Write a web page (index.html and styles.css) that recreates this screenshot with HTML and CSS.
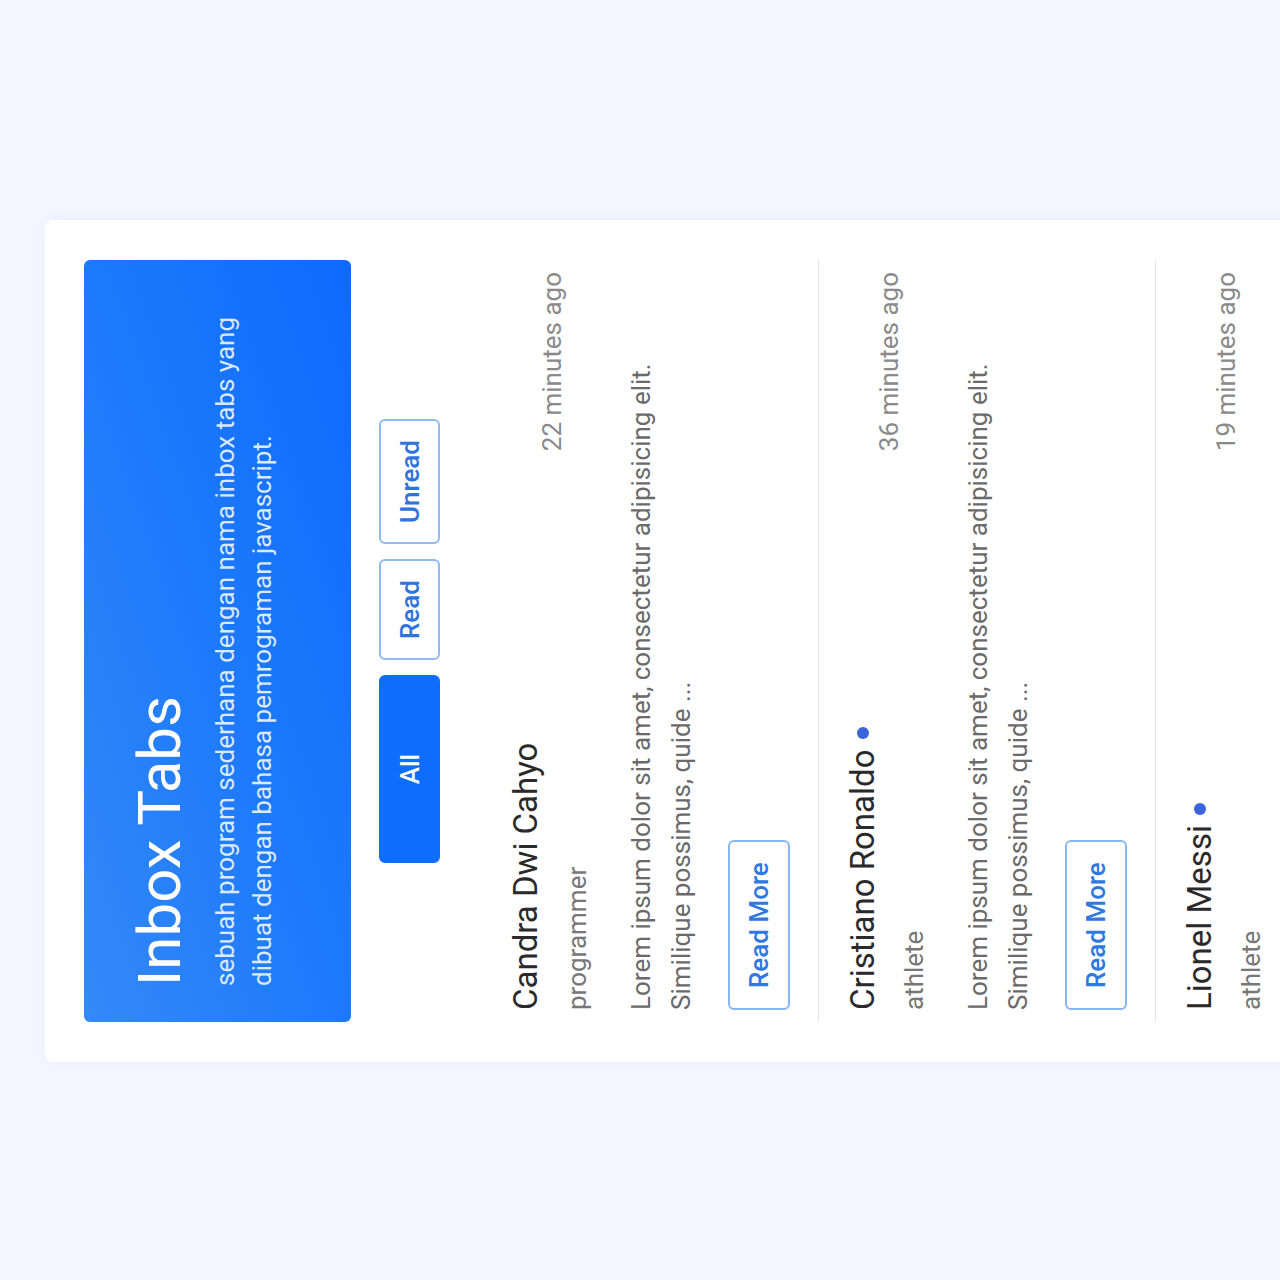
FILE: index.html
```html
<!DOCTYPE html>
<html lang="id">
<head>
<meta charset="utf-8">
<title>Inbox Tabs</title>
<link rel="stylesheet" href="styles.css">
</head>
<body>
<div class="stage">
  <main class="card">
    <header class="hero">
      <h1 class="hero-title">Inbox Tabs</h1>
      <p class="hero-sub">sebuah program sederhana dengan nama inbox tabs yang dibuat dengan bahasa pemrograman javascript.</p>
    </header>
    <nav class="tabs">
      <button class="tab active">All</button>
      <button class="tab">Read</button>
      <button class="tab">Unread</button>
    </nav>
    <ul class="inbox">
      <li class="msg">
        <div class="msg-head">
          <div class="who">
            <div class="name">Candra Dwi Cahyo</div>
            <div class="role">programmer</div>
          </div>
          <span class="time">22 minutes ago</span>
        </div>
        <p class="body">Lorem ipsum dolor sit amet, consectetur adipisicing elit. Similique possimus, quide ...</p>
        <button class="more">Read More</button>
      </li>
      <li class="msg">
        <div class="msg-head">
          <div class="who">
            <div class="name">Cristiano Ronaldo <span class="dot"></span></div>
            <div class="role">athlete</div>
          </div>
          <span class="time">36 minutes ago</span>
        </div>
        <p class="body">Lorem ipsum dolor sit amet, consectetur adipisicing elit. Similique possimus, quide ...</p>
        <button class="more">Read More</button>
      </li>
      <li class="msg">
        <div class="msg-head">
          <div class="who">
            <div class="name">Lionel Messi <span class="dot"></span></div>
            <div class="role">athlete</div>
          </div>
          <span class="time">19 minutes ago</span>
        </div>
        <p class="body">Lorem ipsum dolor sit amet, consectetur adipisicing elit. Similique possimus, quide ...</p>
        <button class="more">Read More</button>
      </li>
    </ul>
  </main>
</div>
</body>
</html>
```
FILE: styles.css
```css
html, body {
  margin: 0;
  padding: 0;
}
body {
  background: #f3f6fe;
  font-family: Roboto, "Liberation Sans", Arial, sans-serif;
}
.stage {
  width: 1280px;
  height: 1280px;
  overflow: hidden;
}
.card {
  width: 842px;
  box-sizing: border-box;
  margin-left: 45px;
  margin-top: 1062px;
  transform-origin: 0 0;
  transform: rotate(-90deg);
  background: #ffffff;
  border-radius: 8px;
  padding: 39px 40px 40px;
  box-shadow: 0 2px 14px rgba(40, 70, 140, 0.06);
}
.hero {
  border-radius: 6px;
  padding: 40px 36px 70px;
  background: linear-gradient(to bottom right, #3389f6 0%, #1f7bfb 45%, #0d6afd 100%);
  color: #ffffff;
}
.hero-title {
  margin: 0;
  font-size: 60px;
  line-height: 72px;
  font-weight: 400;
}
.hero-sub {
  margin: 11px 0 0;
  font-size: 26px;
  line-height: 37px;
  color: rgba(255, 255, 255, 0.85);
}
.tabs {
  display: flex;
  justify-content: center;
  gap: 15px;
  margin-top: 28px;
}
.tab {
  height: 61px;
  padding: 0 19px;
  font-family: inherit;
  font-size: 26px;
  font-weight: 500;
  color: #2f74de;
  background: #ffffff;
  border: 2px solid #8fbaf3;
  border-radius: 6px;
}
.tab.active {
  width: 188px;
  color: #ffffff;
  background: #0d6efd;
  border-color: #0d6efd;
}
.inbox {
  list-style: none;
  margin: 42px 0 0;
  padding: 0;
}
.msg {
  padding: 24px 12px 28px;
  border-bottom: 1px solid #e4e4e4;
}
.msg-head {
  display: flex;
  justify-content: space-between;
  align-items: center;
}
.name {
  display: flex;
  align-items: center;
  gap: 10px;
  font-size: 33px;
  line-height: 40px;
  color: #2a2a2a;
}
.dot {
  width: 12px;
  height: 12px;
  border-radius: 50%;
  background: #3b63dc;
}
.role {
  margin-top: 11px;
  font-size: 26px;
  line-height: 40px;
  color: #777777;
}
.time {
  font-size: 26px;
  line-height: 40px;
  color: #8a8a8a;
}
.body {
  margin: 24px 0 0;
  font-size: 26px;
  line-height: 40px;
  color: #6a6a6a;
}
.more {
  margin-top: 27px;
  height: 62px;
  padding: 0 20px;
  font-family: inherit;
  font-size: 26px;
  font-weight: 500;
  color: #2e78df;
  background: #ffffff;
  border: 2px solid #8ab6f0;
  border-radius: 6px;
}
```
